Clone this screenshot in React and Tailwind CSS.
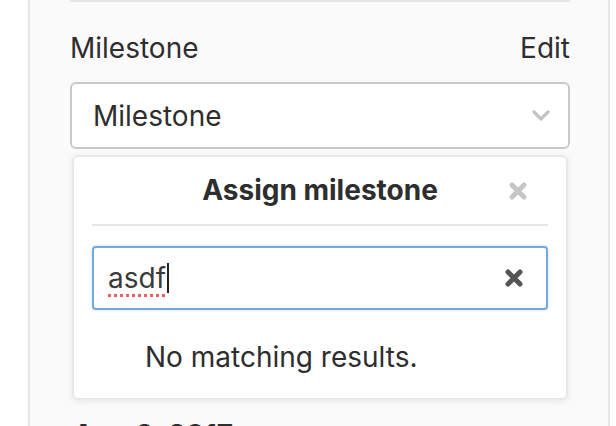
function CloseIcon({ className }) {
  return (
    <svg viewBox="0 0 20 20" className={className} fill="none" stroke="currentColor" strokeWidth="5" strokeLinecap="round">
      <path d="M4 4 L16 16 M16 4 L4 16" />
    </svg>
  );
}

function Chevron() {
  return (
    <svg viewBox="0 0 18 11" className="h-[11px] w-[18px] text-[#c3c3c3]" fill="none" stroke="currentColor" strokeWidth="3.2" strokeLinecap="round" strokeLinejoin="round">
      <path d="M2 2 L9 9 L16 2" />
    </svg>
  );
}

export default function App() {
  return (
    <div className="h-[426px] w-[616px] overflow-hidden bg-white font-['Inter','Liberation_Sans',sans-serif] text-[#2e2e2e]">
      <div className="ml-[28px] mr-[6px] flex h-full flex-col border-x-2 border-[#e6e6e6] bg-[#fafafa] pl-[40px] pr-[38px] *:shrink-0">
        <div className="h-[2px] w-full bg-[#e5e5e5]" />

        <div className="mt-[29px] flex items-center justify-between text-[28px] leading-[34px]">
          <span>Milestone</span>
          <span>Edit</span>
        </div>

        <button className="mt-[17px] flex h-[67px] w-full items-center justify-between rounded-[6px] border-2 border-[#c9c9c9] bg-white pl-[21px] pr-[18px] text-left text-[28px] leading-[34px]">
          <span>Milestone</span>
          <Chevron />
        </button>

        <div className="mx-[2px] mt-[6px] flex flex-col rounded-[6px] border-2 border-[#e8e8e8] bg-white px-[18px] pb-[24px] pt-[16px] shadow-[0_2px_6px_rgba(0,0,0,0.08)]">
          <div className="relative text-center text-[28px] font-bold leading-[34px]">
            Assign milestone
            <CloseIcon className="absolute right-[20px] top-[8px] h-[20px] w-[20px] text-[#c6c6c6]" />
          </div>
          <div className="mt-[17px] h-[2px] bg-[#e5e5e5]" />
          <div className="mt-[20px] flex h-[64px] items-center justify-between rounded-[4px] border-2 border-[#73a9e0] bg-white pl-[14px] pr-[22px] shadow-[0_0_3px_rgba(115,169,224,0.4)]">
            <span className="flex items-center text-[28px] leading-[34px] text-[#3a3a3a]">
              <span className="underline decoration-[#f06060] decoration-dotted decoration-[3px] underline-offset-[6px]">asdf</span>
              <span className="ml-[1px] inline-block h-[30px] w-[2px] bg-[#222]" />
            </span>
            <CloseIcon className="h-[20px] w-[20px] text-[#555]" />
          </div>
          <p className="mt-[30px] pl-[53px] text-[28px] leading-[34px]">No matching results.</p>
        </div>

        <div className="mt-[18px] flex items-baseline gap-[60px] pl-[3px]">
          <span className="text-[28px] font-bold leading-[34px]">Aug 9, 2017</span>
          <span className="text-[26px] leading-[34px] text-[#666]">- remove due date</span>
        </div>
      </div>
    </div>
  );
}
